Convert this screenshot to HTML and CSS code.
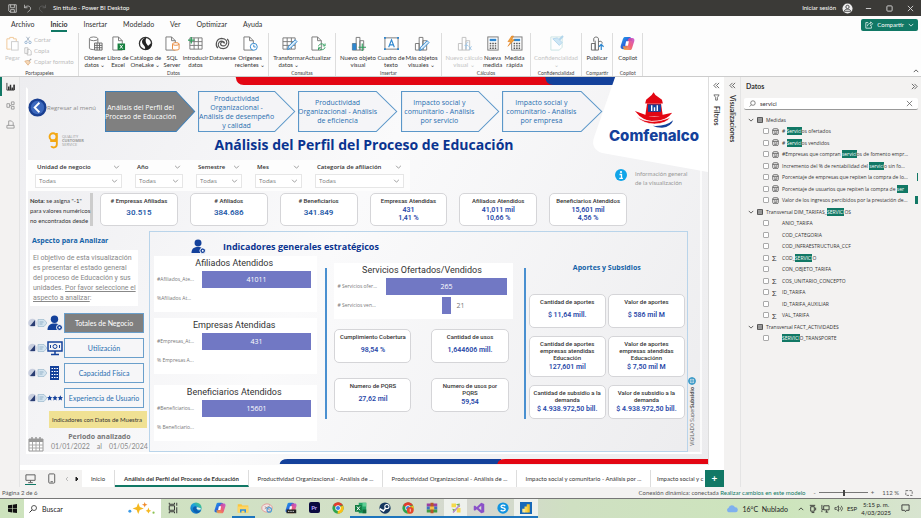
FILE: index.html
```html
<!DOCTYPE html>
<html lang="es">
<head>
<meta charset="utf-8">
<title>Sin título - Power BI Desktop</title>
<link rel="stylesheet" href="styles.css">
</head>
<body>
<svg class="defs" aria-hidden="true">
  <defs>
    <linearGradient id="cop1" x1="0" y1="0" x2="1" y2="1"><stop offset="0" stop-color="#1fa5ee"/><stop offset=".5" stop-color="#2b62d9"/><stop offset="1" stop-color="#35b27c"/></linearGradient>
    <linearGradient id="cop2" x1="1" y1="0" x2="0" y2="1"><stop offset="0" stop-color="#c04ad8"/><stop offset=".5" stop-color="#f0506e"/><stop offset="1" stop-color="#f7b52c"/></linearGradient>
    <linearGradient id="edge" x1="0" y1="1" x2="1" y2="0"><stop offset="0" stop-color="#0b62b8"/><stop offset=".5" stop-color="#1c9fe0"/><stop offset="1" stop-color="#57d36b"/></linearGradient>
    <symbol id="chev" viewBox="0 0 8 5"><path d="M1 1l3 3 3-3" fill="none" stroke="currentColor"/></symbol>
    <symbol id="page" viewBox="0 0 16 16"><path d="M3 1h6l4 4v10H3zM9 1v4h4" fill="#fff" stroke="#777"/></symbol>
    <symbol id="copilot" viewBox="0 0 16 16"><path d="M5 1h5c1.500 0 2 1 2.500 2.500L13 5h-2c-1 0-1.500.6-1.800 1.600L7.500 12c-.5 1.500-1 2-2.500 2H3c-2 0-2.800-1.500-2.200-3.500L3 3.500C3.500 2 4 1 5 1z" fill="url(#cop1)"/><path d="M11 15H6c-1.500 0-2-1-2.500-2.500L3 11h2c1 0 1.500-.6 1.800-1.600L8.500 4C9 2.500 9.500 2 11 2h2c2 0 2.800 1.500 2.200 3.500L13 12.500C12.500 14 12 15 11 15z" fill="url(#cop2)" opacity=".9"/><path d="M6.500 5.500h3L8.500 10.500h-3z" fill="#fff"/></symbol>
    <symbol id="bars" viewBox="0 0 16 16"><path d="M1.500 8h4v7h-4zM5.500 1.500h4V15h-4zM9.500 5h4v10h-4z" fill="#fff" stroke="#777"/></symbol>
    <symbol id="calc" viewBox="0 0 16 16"><rect x="3" y="1" width="11" height="14" fill="#fff" stroke="#777"/><rect x="5" y="3" width="7" height="2.500" fill="#2f87cf"/><path d="M5 8h7M5 10.500h7M5 13h7" stroke="#555" stroke-width="1.500" stroke-dasharray="1.700 1"/></symbol>
    <symbol id="table" viewBox="0 0 16 16"><path d="M1 2h13v12H1zM1 6h13M1 10h13M5.500 2v12M10 2v12" fill="#fff" stroke="#777"/></symbol>
    <symbol id="person" viewBox="0 0 16 16"><circle cx="7.500" cy="4.200" r="3.700" fill="#14419b"/><path d="M.5 15c0-5 3-6.500 7-6.500s5.500 1.500 6.500 6.500z" fill="#14419b"/><circle cx="12.500" cy="12.500" r="3" fill="#14419b" stroke="#fff"/><circle cx="12.500" cy="12.500" r="1" fill="#fff"/></symbol>
    <symbol id="measure" viewBox="0 0 10 10"><rect x="1" y="1" width="8" height="8.500" rx="2" fill="none" stroke="#444"/><path d="M1 3.500h8M3 5.500h1.500v1M5.500 5.500H7v1M3 7.700h4" stroke="#444" fill="none"/></symbol>
    <symbol id="tbl" viewBox="0 0 8 8"><path d="M1 1h6v6H1z" fill="#fff" stroke="#333" stroke-width="1.500"/><path d="M1 4h6M4 1v6" stroke="#333" stroke-width=".8"/></symbol>
    <symbol id="dbl" viewBox="0 0 8 8"><path d="M4 1L1 4l3 3M7 1L4 4l3 3" fill="none" stroke="currentColor" stroke-width=".8"/></symbol>
    <symbol id="tag" viewBox="0 0 19 10"><circle cx="4.500" cy="5" r="4.300" fill="#c9cfdf"/><path d="M2 8L7 2v6z" fill="#2a3d73"/><path d="M10 1.500h6l3 3.500-3 3.500h-6z" fill="#d3e3ee" stroke="#8fb0c8" stroke-width=".6"/><path d="M11.500 4h4M11.500 6h3" stroke="#7a9cb8" stroke-width=".7"/></symbol>
    <symbol id="chrome" viewBox="0 0 16 16"><circle cx="8" cy="8" r="7.500" fill="#2da44e"/><path d="M8 8L1.500 4.200A7.500 7.500 0 0 1 14.800 4.800H8z" fill="#e33b2e"/><path d="M8 8l6.800-3.200A7.500 7.500 0 0 1 7.500 15.500z" fill="#fbc116"/><circle cx="8" cy="8" r="3.600" fill="#fff"/><circle cx="8" cy="8" r="2.700" fill="#3b7de9"/></symbol>
  </defs>
</svg>

<div class="app">
<header class="titlebar">
  <svg class="i9" viewBox="0 0 12 12"><path d="M1 1h10v10H3L1 9zM3.500 1v4h5V1M3.500 11V7.500h5V11" fill="none" stroke="#ddd"/></svg>
  <svg class="i9" viewBox="0 0 12 12"><path d="M2 1v4h4M2 5c2-3 7-3 8 0s-2 4-4 6" fill="none" stroke="#ccc"/></svg>
  <svg class="i9" viewBox="0 0 12 12"><path d="M10 1v4H6M10 5C8 2 3 2 2 5s2 4 4 6" fill="none" stroke="#666"/></svg>
  <span>Sin título - Power BI Desktop</span>
  <span class="signin">Iniciar sesión</span>
  <svg class="i11" viewBox="0 0 12 12"><circle cx="6" cy="6" r="5.500" fill="#eee"/><circle cx="6" cy="4.300" r="1.800" fill="none" stroke="#444"/><path d="M2.500 9c0-3 7-3 7 0z" fill="none" stroke="#444"/></svg>
  <div class="winbtns">
    <svg class="i7" viewBox="0 0 8 8"><path d="M1 4h6" stroke="#ddd"/></svg>
    <svg class="i7" viewBox="0 0 8 8"><rect x="1" y="1" width="6" height="6" rx="1" fill="none" stroke="#ddd"/></svg>
    <svg class="i7" viewBox="0 0 8 8"><path d="M1 1l6 6M7 1L1 7" stroke="#ddd"/></svg>
  </div>
</header>

<nav class="menu">
  <a href="#">Archivo</a><a href="#" class="on">Inicio</a><a href="#">Insertar</a><a href="#">Modelado</a><a href="#">Ver</a><a href="#">Optimizar</a><a href="#">Ayuda</a>
  <button class="share"><svg class="i8" viewBox="0 0 10 10"><path d="M4 2H1v7h7V6.500M3 6.500C3 4 5 3 7 3V1l2.500 2.500L7 6V4.500" fill="none" stroke="#fff" stroke-width=".9"/></svg>Compartir<svg class="chev" ><use href="#chev"/></svg></button>
</nav>

<section class="ribbon">
  <div class="group g1">
    <div class="clip">
      <button class="tool off"><svg viewBox="0 0 16 16"><path d="M2 3h3V1.500h4V3h3v3M2 3v11h4" fill="none" stroke="#f0c896"/><rect x="7" y="6" width="7" height="9" fill="#fff" stroke="#ccc"/></svg>Pegar</button>
      <div class="small">
        <button><svg class="i8" viewBox="0 0 10 10"><path d="M3 1l3.500 5M7 1L3.500 6" stroke="#9ab" fill="none"/><circle cx="2.500" cy="8" r="1.500" fill="none" stroke="#8ac"/><circle cx="7.500" cy="8" r="1.500" fill="none" stroke="#8ac"/></svg>Cortar</button>
        <button><svg class="i8" viewBox="0 0 10 10"><path d="M1 1h4v7H1zM4 3h3l2 2v5H4z" fill="#fff" stroke="#bbb"/></svg>Copia</button>
        <button><svg class="i8" viewBox="0 0 10 10"><path d="M1 4l4 5 3-4-3-2z" fill="#f6d9b8" stroke="#e0b080"/><path d="M6 4l3-3" stroke="#aaa" stroke-width="1.500"/></svg>Copiar formato</button>
      </div>
    </div>
    <span class="cap">Portapapeles</span>
  </div>
  <div class="group">
    <div class="tools t2">
      <button class="tool"><svg viewBox="0 0 16 16"><path d="M1.500 3v10c0 2 9 2 9 0V3" fill="#fff" stroke="#777"/><ellipse cx="6" cy="3" rx="4.500" ry="2" fill="#fff" stroke="#777"/><path d="M7 7.500h8V15H7zM7 10h8M7 12.500h8M9.700 7.500V15M12.300 7.500V15" fill="#fff" stroke="#666"/></svg>Obtener<br>datos ⌄</button>
      <button class="tool"><svg viewBox="0 0 16 16"><use href="#page" x="-1"/><rect x="7" y="8" width="8" height="7" fill="#16803f"/><path d="M9.500 9.500l3 4M12.500 9.500l-3 4" stroke="#fff"/></svg>Libro de<br>Excel</button>
      <button class="tool"><svg viewBox="0 0 16 16"><circle cx="8" cy="8" r="6.500" fill="#fff" stroke="#333" stroke-width="1.400"/><path d="M9 1.500c-5 1-6 5-3 8 2 2 2 4 1 5 5 1 8-3 7-7l-3 3c-2-2-4-5-2-9z" fill="#222"/></svg>Catálogo de<br>OneLake ⌄</button>
      <button class="tool"><svg viewBox="0 0 16 16"><use href="#page" x="-2"/><path d="M8 8.500v5.500c0 1.300 7 1.300 7 0V8.500" fill="#fff" stroke="#e8883a"/><ellipse cx="11.500" cy="8.500" rx="3.500" ry="1.400" fill="#fff" stroke="#e8883a"/></svg>SQL<br>Server</button>
      <button class="tool"><svg viewBox="0 0 16 16"><use href="#table" x="1"/><path d="M0 4.500h7M3.500 1v7" stroke="#2f9e5c" stroke-width="1.300"/></svg>Introducir<br>datos</button>
      <button class="tool"><svg viewBox="0 0 16 16"><path d="M3 13C0 10 1 3 7 2.500c5 0 7 4 4.500 7-2 2-6 1-5.500-1.500.5-2 3-2 3.500-.5M13 3c3 3 2 10-4 10.500-5 0-7-4-4.500-7 2-2 6-1 5.500 1.500" fill="none" stroke="#555" stroke-width="1.200"/></svg>Dataverse</button>
      <button class="tool"><svg viewBox="0 0 16 16"><use href="#page" x="-2"/><circle cx="11.500" cy="11.500" r="3.700" fill="#fff" stroke="#2f87cf"/><path d="M11.500 9.300v2.400h2" fill="none" stroke="#2f87cf"/></svg>Orígenes<br>recientes ⌄</button>
    </div>
    <span class="cap">Datos</span>
  </div>
  <div class="group">
    <div class="tools t3">
      <button class="tool"><svg viewBox="0 0 16 16"><use href="#table"/><path d="M6 14.500L7 11l7-7 2 2-7 7z" fill="#d8ebfa" stroke="#2f87cf"/></svg>Transformar<br>datos ⌄</button>
      <button class="tool"><svg viewBox="0 0 16 16"><use href="#page" x="-2"/><path d="M8 11c.5-3 5-3.500 6.500-1M15 8v2.500h-2.500M15 12c-.5 3-5 3.500-6.500 1M8 15v-2.500h2.500" fill="none" stroke="#2f9e5c"/></svg>Actualizar</button>
    </div>
    <span class="cap">Consultas</span>
  </div>
  <div class="group">
    <div class="tools t4">
      <button class="tool"><svg viewBox="0 0 16 16"><use href="#bars"/><path d="M1.500 8h4v7h-4z" fill="#2f87cf"/><path d="M8 12h8M12 8v8" stroke="#2f9e5c" stroke-width="1.200"/></svg>Nuevo objeto<br>visual</button>
      <button class="tool"><svg viewBox="0 0 16 16"><rect x="1" y="2" width="14" height="12" fill="#fff" stroke="#777"/><path d="M5 12l3-8 3 8M6 9.500h4" fill="none" stroke="#2f87cf" stroke-width="1.200"/><path d="M0 1h2v2H0zM14 1h2v2h-2zM0 13h2v2H0zM14 13h2v2h-2z" fill="#2f87cf"/></svg>Cuadro de<br>texto</button>
      <button class="tool"><svg viewBox="0 0 16 16"><use href="#bars"/><path d="M6 15.500L7 12l7-7 2 2-7 7z" fill="#d8ebfa" stroke="#2f87cf"/></svg>Más objetos<br>visuales ⌄</button>
    </div>
    <span class="cap">Insertar</span>
  </div>
  <div class="group">
    <div class="tools t5">
      <button class="tool off"><svg viewBox="0 0 16 16" opacity=".45"><use href="#bars"/><path d="M12 7c-2-1-2 2-2.500 7M8 10h4M12.500 11l3 4M15.500 11l-3 4" fill="none" stroke="#2f87cf"/></svg>Nuevo cálculo<br>visual ⌄</button>
      <button class="tool"><svg viewBox="0 0 16 16"><use href="#calc"/></svg>Nueva<br>medida</button>
      <button class="tool"><svg viewBox="0 0 16 16"><use href="#calc" x="2"/><path d="M5 0L1 6h3L1 11l7-7H5l2-4z" fill="#f2a33a" stroke="#e07b1a" stroke-width=".6"/></svg>Medida<br>rápida</button>
    </div>
    <span class="cap">Cálculos</span>
  </div>
  <div class="group">
    <div class="tools t6"><button class="tool off"><svg viewBox="0 0 16 16" opacity=".5"><path d="M2 1h12v11l-3 3H2z" fill="#fff" stroke="#9cc"/><path d="M4 3l7 7 3-3-5-5z" fill="#9fd0ee" stroke="#6ab0dc"/><path d="M11 4l4-4" stroke="#6ab0dc" stroke-width="2"/></svg>Confidencialidad<br>⌄</button></div>
    <span class="cap">Confidencialidad</span>
  </div>
  <div class="group">
    <div class="tools t7"><button class="tool"><svg viewBox="0 0 16 16"><path d="M1.500 8h4v7h-4zM5.500 15V5M4 6V3c0-2.500 5-2.500 5 0v12H5.500M9 6c3-1 4 0 4 2" fill="none" stroke="#666"/><path d="M12 15V9M9.500 11.500L12 9l2.500 2.500" fill="none" stroke="#2f87cf" stroke-width="1.300"/></svg>Publicar</button></div>
    <span class="cap">Compartir</span>
  </div>
  <div class="group">
    <div class="tools t7"><button class="tool"><svg viewBox="0 0 16 16"><use href="#copilot"/></svg>Copilot</button></div>
    <span class="cap">Copilot</span>
  </div>
  <button class="collapse" aria-label="Contraer la cinta"><svg class="chev up"><use href="#chev"/></svg></button>
</section>

<main class="work">
  <nav class="rail">
    <a href="#" class="on" aria-label="Informe"><svg class="i9" viewBox="0 0 10 10"><path d="M1 1v8h8V3" fill="none" stroke="#333"/><path d="M3 5v4M5 3v6M7 6v3M9 3v6" stroke="#333" stroke-width="1.600"/></svg></a>
    <a href="#" aria-label="Modelo"><svg class="i9" viewBox="0 0 10 10"><path d="M1 3h3v4H1zM6 1h3v3H6zM6 6h3v3H6zM4 5h2" fill="none" stroke="#999"/></svg></a>
    <a href="#" aria-label="Consultas"><svg class="i9" viewBox="0 0 10 10"><path d="M3 6V1h3l2 2v3M1 6h8v3H1z" fill="none" stroke="#999"/></svg></a>
  </nav>

  <div class="center">
  <div class="report">
    <svg class="backdrop" viewBox="0 0 689 388" preserveAspectRatio="none" aria-hidden="true">
      <path d="M216 0H540V8H224Q217 8 216 0z" fill="#e30613"/>
      <path d="M526 0H600L594 8H534Q527 8 526 0z" fill="#14419b"/>
      <path d="M596 0H689V95L583 76Q571 72 575 60z" fill="#fff"/>
      <path d="M260 387Q261 382 268 382H482V387z" fill="#14419b"/>
      <path d="M478 387Q479 382 486 382H689V387z" fill="#e30613"/>
    </svg>
    <div class="frame">
      <div class="head">
        <a href="#" class="back"><svg viewBox="0 0 20 20"><circle cx="10" cy="10" r="9.500" fill="#1a3f91"/><circle cx="10" cy="10" r="7" fill="#3c68bd"/><path d="M12 5l-5 5 5 5" fill="none" stroke="#fff" stroke-width="2"/></svg>Regresar al menú</a>
        <nav class="steps">
          <a href="#" class="on"><svg viewBox="0 0 90 41" preserveAspectRatio="none"><path d="M.5.500H71L89.500 20.500 71 40.500H.5z"/></svg><span>Análisis del Perfil del<br>Proceso de Educación</span></a>
          <a href="#"><svg viewBox="0 0 90 41" preserveAspectRatio="none"><path d="M.5.500H71L89.500 20.500 71 40.500H.5z"/></svg><span>Productividad<br>Organizacional -<br>Análisis de desempeño<br>y calidad</span></a>
          <a href="#"><svg viewBox="0 0 90 41" preserveAspectRatio="none"><path d="M.5.500H71L89.500 20.500 71 40.500H.5z"/></svg><span>Productividad<br>Organizacional - Análisis<br>de eficiencia</span></a>
          <a href="#"><svg viewBox="0 0 90 41" preserveAspectRatio="none"><path d="M.5.500H71L89.500 20.500 71 40.500H.5z"/></svg><span>Impacto social y<br>comunitario - Análisis<br>por servicio</span></a>
          <a href="#"><svg viewBox="0 0 90 41" preserveAspectRatio="none"><path d="M.5.500H71L89.500 20.500 71 40.500H.5z"/></svg><span>Impacto social y<br>comunitario - Análisis<br>por empresa</span></a>
        </nav>
        <div class="brand">
          <svg viewBox="0 0 44 38"><path d="M12 12l1-4 6-5 2-3 2 3 7 5 1 4z" fill="#e30613"/><path d="M14 12h15l2 14H12z" fill="#e30613"/><path d="M15 13h14v8H15z" fill="#14419b"/><path d="M19 14v6M22 16v4M25 14v6" stroke="#fff" stroke-width="1.500"/><path d="M1 20l11 4q10 5 19 0l10-2q-6 8-17 9-14 1-23-11z" fill="#e30613"/><path d="M3 26q14 10 36 1-5 7-17 7-12 0-19-8z" fill="#e30613" stroke="#fff" stroke-width=".7"/><path d="M20 36q14 1 22-6-2 7-12 8-6 0-10-2z" fill="#14419b"/></svg>
          <span>Comfenalco</span>
        </div>
        <div class="quality"><svg viewBox="0 0 12 18"><circle cx="5" cy="5" r="3.700" fill="none" stroke="#f3a712" stroke-width="2"/><path d="M9 1v12c0 4-5 4-6 2M2 9.500h6" fill="none" stroke="#f3a712" stroke-width="2"/></svg><span>QUALITY<br><b>CUSTOMER</b><br>SERVICE</span></div>
        <h1>Análisis del Perfil del Proceso de Educación</h1>
      </div>

      <div class="slicers">
        <label class="slicer"><span class="cat">Unidad de negocio<svg class="chev"><use href="#chev"/></svg></span><span class="pick"><select><option>Todas</option></select><svg class="chev"><use href="#chev"/></svg></span></label>
        <label class="slicer"><span class="cat">Año<svg class="chev"><use href="#chev"/></svg></span><span class="pick"><select><option>Todas</option></select><svg class="chev"><use href="#chev"/></svg></span></label>
        <label class="slicer"><span class="cat">Semestre<svg class="chev"><use href="#chev"/></svg></span><span class="pick"><select><option>Todas</option></select><svg class="chev"><use href="#chev"/></svg></span></label>
        <label class="slicer"><span class="cat">Mes<svg class="chev"><use href="#chev"/></svg></span><span class="pick"><select><option>Todas</option></select><svg class="chev"><use href="#chev"/></svg></span></label>
        <label class="slicer"><span class="cat">Categoría de afiliación<svg class="chev"><use href="#chev"/></svg></span><span class="pick"><select><option>Todas</option></select><svg class="chev"><use href="#chev"/></svg></span></label>
        <div class="info"><svg viewBox="0 0 12 12"><circle cx="6" cy="6" r="6" fill="#12a5e8"/><circle cx="6" cy="3" r="1.100" fill="#fff"/><path d="M4.500 5.500H6.500V9.300M4.300 9.300h3.600" fill="none" stroke="#fff" stroke-width="1.300"/></svg><span>Información general<br>de la visualización</span></div>
      </div>

      <div class="kpis">
        <p class="note"><b>Nota:</b> se asigna "-1"<br>para valores numéricos<br>no encontrados desde</p>
        <div class="cards six">
          <div class="card one"><h3># Empresas Afiliadas</h3><b>30.515</b></div>
          <div class="card one"><h3># Afiliados</h3><b>384.686</b></div>
          <div class="card one"><h3># Beneficiarios</h3><b>341.849</b></div>
          <div class="card"><h3>Empresas Atendidas</h3><b>431<br>1,41 %</b></div>
          <div class="card"><h3>Afiliados Atendidos</h3><b>41,011 mil<br>10,66 %</b></div>
          <div class="card"><h3>Beneficiarios Atendidos</h3><b>15,601 mil<br>4,56 %</b></div>
        </div>
      </div>

      <div class="body">
        <aside class="aspects">
          <h2>Aspecto para Analizar</h2>
          <p>El objetivo de esta visualización<br>es presentar el estado general<br>del proceso de Educación y sus<br>unidades. <u>Por favor seleccione el</u><br><u>aspecto a analizar</u>:</p>
          <div class="aspect"><svg class="tag"><use href="#tag"/></svg><svg class="pic"><use href="#person"/></svg><button class="on">Totales de Negocio</button></div>
          <div class="aspect"><svg class="tag"><use href="#tag"/></svg><svg class="pic" viewBox="0 0 16 16"><path d="M1 2h14v9H1zM8 11v3M4 14.500h8" fill="none" stroke="#14419b" stroke-width="1.500"/><circle cx="8" cy="6.500" r="2" fill="none" stroke="#14419b"/><path d="M3.500 5v3M12.500 5v3" stroke="#14419b"/></svg><button>Utilización</button></div>
          <div class="aspect"><svg class="tag"><use href="#tag"/></svg><svg class="pic" viewBox="0 0 16 16"><path d="M3 1h9v14H3z" fill="#14419b"/><path d="M4.500 3.500h7M4.500 6.500h7M4.500 9.500h7M4.500 12.500h7" stroke="#fff" stroke-width="1.200" stroke-dasharray="1.500 1"/></svg><button>Capacidad Física</button></div>
          <div class="aspect"><svg class="tag"><use href="#tag"/></svg><svg class="pic" viewBox="0 0 18 16"><path id="st" d="M3 5l.9 2 2.100.2-1.600 1.500.5 2.100L3 9.700l-1.900 1.100.5-2.100L0 7.200 2.100 7z" fill="#14419b"/><use href="#st" x="6"/><use href="#st" x="12"/></svg><button>Experiencia de Usuario</button></div>
          <div class="sample">Indicadores con Datos de Muestra</div>
          <div class="period">
            <svg viewBox="0 0 16 16"><path d="M1 3h14v12H1z" fill="#fff" stroke="#999"/><path d="M1 3h14v3H1z" fill="#999"/><path d="M4 1v3M8 1v3M12 1v3" stroke="#999" stroke-width="1.500"/><path d="M1 9h14M1 12h14M4.500 6v9M8 6v9M11.500 6v9" stroke="#aaa"/></svg>
            <h3>Periodo analizado</h3>
            <span>01/01/2022</span><span>al</span><span>01/05/2024</span>
          </div>
        </aside>

        <section class="panel">
          <h2><svg><use href="#person"/></svg>Indicadores generales estratégicos</h2>
          <div class="cols">
            <div class="funnels">
              <figure><figcaption>Afiliados Atendidos</figcaption><span>#Afiliados_Ate...</span><div class="bar">41011</div><span>%Afiliados At...</span></figure>
              <figure><figcaption>Empresas Atendidas</figcaption><span>#Empresas_At...</span><div class="bar">431</div><span>% Empresas A...</span></figure>
              <figure class="last"><figcaption>Beneficiarios Atendidos</figcaption><span>#Beneficiarios...</span><div class="bar">15601</div><span>% Beneficiario...</span></figure>
            </div>
            <div class="mid">
              <figure><figcaption>Servicios Ofertados/Vendidos</figcaption><span># Servicios ofer...</span><div class="bar">265</div><span># Servicios ven...</span><div class="short"><i></i><span class="n">21</span></div></figure>
              <div class="cards two">
                <div class="card one"><h3>Cumplimiento Cobertura</h3><b>98,54 %</b></div>
                <div class="card one"><h3>Cantidad de usos</h3><b>1,644606 mill.</b></div>
                <div class="card one"><h3>Numero de PQRS</h3><b>27,62 mil</b></div>
                <div class="card one"><h3>Numero de usos por PQRS</h3><b>59,54</b></div>
              </div>
            </div>
            <div class="right">
              <h3 class="sub">Aportes y Subsidios</h3>
              <div class="cards money">
                <div class="card one"><h3>Cantidad de aportes</h3><b>$ 11,64 mill.</b></div>
                <div class="card one"><h3>Valor de aportes</h3><b>$ 586 mil M</b></div>
                <div class="card one"><h3>Cantidad de aportes empresas atendidas Educación</h3><b>127,601 mil</b></div>
                <div class="card one"><h3>Valor de aportes<br>empresas atendidas Educaciónn</h3><b>$ 7,50 mil M</b></div>
                <div class="card one"><h3>Cantidad de subsidio a la demanda</h3><b>$ 4.938.972,50 bill.</b></div>
                <div class="card one"><h3>Valor de subsidio a la demanda</h3><b>$ 4.938.972,50 bill.</b></div>
              </div>
            </div>
          </div>
        </section>
        <div class="seal"><svg viewBox="0 0 8 8"><circle cx="4" cy="4" r="3" fill="none" stroke="#3f9cc9" stroke-width="1.500"/><path d="M4 0v8M0 4h8" stroke="#3f9cc9"/></svg><span>VIGILADO Super<b>Subsidio</b></span></div>
      </div>
    </div>
  </div>

  <nav class="pages">
    <button class="view on" aria-label="Escritorio"><svg viewBox="0 0 12 12"><path d="M1 2h10v6H1zM6 8v2M3.500 10.500h5" fill="none" stroke="#555"/></svg></button>
    <button class="view" aria-label="Móvil"><svg viewBox="0 0 12 12"><rect x="3" y="1" width="6.500" height="10" rx="1" fill="none" stroke="#555"/><path d="M5 9.500h2.500" stroke="#555"/></svg></button>
    <button class="step" aria-label="Anterior"><svg viewBox="0 0 4 6"><path d="M3 1L1 3l2 2" fill="none" stroke="#bbb"/></svg></button>
    <button class="step" aria-label="Siguiente"><svg viewBox="0 0 4 6"><path d="M1 1l2 2-2 2z" fill="#222" stroke="#222"/></svg></button>
    <a href="#" class="home">Inicio</a>
    <a href="#" class="on">Análisis del Perfil del Proceso de Educación</a>
    <a href="#">Productividad Organizacional - Análisis de ...</a>
    <a href="#">Productividad Organizacional - Análisis de ...</a>
    <a href="#">Impacto social y comunitario - Análisis por ...</a>
    <a href="#" class="cut">Impacto social y c</a>
  </nav>
  </div>

  <aside class="side filters"><svg class="i7"><use href="#dbl"/></svg><svg class="i7" viewBox="0 0 8 8"><path d="M1 1h6L5 4v3H3V4z" fill="none" stroke="#444" stroke-width=".8"/></svg><span>Filtros</span><button class="add" aria-label="Nueva página">+</button></aside>
  <aside class="side visuals"><svg class="i7"><use href="#dbl"/></svg><span>Visualizaciones</span></aside>
  <aside class="data">
    <header><h2>Datos</h2><svg class="i7 flip"><use href="#dbl"/></svg></header>
    <div class="search"><svg class="i7" viewBox="0 0 8 8"><circle cx="4.500" cy="3.500" r="2.600" fill="none" stroke="#555" stroke-width=".8"/><path d="M2.700 5.500L.7 7.500" stroke="#555" stroke-width=".8"/></svg><input type="text" value="servici" aria-label="Buscar"><svg class="i7" viewBox="0 0 8 8"><path d="M1 1l6 6M7 1L1 7" stroke="#555" stroke-width=".8"/></svg></div>
    <div class="tree">
      <div class="node"><svg class="chev"><use href="#chev"/></svg><svg class="ti"><use href="#tbl"/></svg><span>Medidas</span></div>
      <label><input type="checkbox"><svg><use href="#measure"/></svg><span># <mark>Servici</mark>os ofertados</span></label>
      <label><input type="checkbox"><svg><use href="#measure"/></svg><span># <mark>Servici</mark>os vendidos</span></label>
      <label><input type="checkbox"><svg><use href="#measure"/></svg><span>#Empresas que compran <mark>servici</mark>os de fomento empr...</span></label>
      <label><input type="checkbox"><svg><use href="#measure"/></svg><span>Incremento del % de rentabilidad del <mark>servici</mark>o sin fo...</span></label>
      <label><input type="checkbox"><svg><use href="#measure"/></svg><span>Porcentaje de empresas que repiten la compra de lo...</span><i class="thin"></i></label>
      <label><input type="checkbox"><svg><use href="#measure"/></svg><span>Porcentaje de usuarios que repiten la compra de <mark>ser   </mark></span></label>
      <label><input type="checkbox"><svg><use href="#measure"/></svg><span>Valor de los ingresos percibidos por la prestación de...</span><i></i></label>
      <div class="node"><svg class="chev"><use href="#chev"/></svg><svg class="ti"><use href="#tbl"/></svg><span>Transversal DIM_TARIFAS_<mark>SERVICI</mark>OS</span></div>
      <label><input type="checkbox"><em></em><span>ANIO_TARIFA</span></label>
      <label><input type="checkbox"><em></em><span>COD_CATEGORIA</span></label>
      <label><input type="checkbox"><em></em><span>COD_INFRAESTRUCTURA_CCF</span></label>
      <label><input type="checkbox"><em>Σ</em><span>COD_<mark>SERVICI</mark>O</span></label>
      <label><input type="checkbox"><em></em><span>CON_OBJETO_TARIFA</span></label>
      <label><input type="checkbox"><em>Σ</em><span>COS_UNITARIO_CONCEPTO</span></label>
      <label><input type="checkbox"><em>Σ</em><span>ID_TARIFA</span></label>
      <label><input type="checkbox"><em></em><span>ID_TARIFA_AUXILIAR</span></label>
      <label><input type="checkbox"><em>Σ</em><span>VAL_TARIFA</span></label>
      <div class="node"><svg class="chev"><use href="#chev"/></svg><svg class="ti"><use href="#tbl"/></svg><span>Transversal FACT_ACTIVIDADES</span></div>
      <label><input type="checkbox"><em></em><span><mark>SERVICI</mark>O_TRANSPORTE</span></label>
    </div>
  </aside>
</main>

<footer class="status">
  <span>Página 2 de 6</span>
  <span class="conn">Conexión dinámica: conectada <a href="#">Realizar cambios en este modelo</a></span>
  <div class="zoom"><span>-</span><input type="range" min="0" max="100" value="52" aria-label="Zoom"><span>+</span></div>
  <span>112 %</span>
  <svg class="i8" viewBox="0 0 10 8"><rect x="1" y="1" width="8" height="6" fill="none" stroke="#555" stroke-dasharray="3 1.500"/></svg>
</footer>

<footer class="taskbar">
  <button class="start" aria-label="Inicio"><svg viewBox="0 0 10 10"><path d="M0 1.500l4.500-.7v4H0zM5.200.7L10 0v4.800H5.200zM0 5.400h4.500v4L0 8.700zM5.200 5.400H10V10l-4.800-.6z" fill="#111"/></svg></button>
  <label class="find"><svg viewBox="0 0 8 8"><circle cx="5" cy="3" r="2.500" fill="none" stroke="#333" stroke-width=".8"/><path d="M3.200 4.800L.5 7.500" stroke="#333"/></svg><input type="text" value="Buscar" aria-label="Buscar"><svg class="spark" viewBox="0 0 30 14"><path d="M12 1l1.700 4.300L18 7l-4.300 1.700L12 13l-1.700-4.300L6 7l4.300-1.700z" fill="#f5b81f"/><path d="M19 0l.8 2.200L22 3l-2.200.8L19 6l-.8-2.200L16 3l2.200-.8z" fill="#f08a2c"/><circle cx="3" cy="10" r="1.600" fill="#3e9be8"/><path d="M23 6l1 2.500 2 1-2 1-1 2-1-2-2-1 2-1z" fill="#f5b81f"/><circle cx="28.500" cy="11.500" r="1.200" fill="#8cc152"/></svg></label>
  <div class="apps">
    <button aria-label="Vista de tareas"><svg viewBox="0 0 16 16"><path d="M3 5h7v6H3zM3 1v2h7V1M3 15v-2h7v2M13 1v4M13 7v8" fill="none" stroke="#333" stroke-width="1.300"/></svg></button>
    <button aria-label="Edge"><svg viewBox="0 0 16 16"><circle cx="8" cy="8" r="7.500" fill="url(#edge)"/><path d="M15 9c-1 2-5 2-6 0 1-2-1-4-3-3-4 2-2 8 3 9 3 0 5-2 6-4-2 1-5 1-6-1" fill="#0d5fb0"/><path d="M9 9c-1-1 0-2 1-2s4 1 5 2c-1 2-5 1.500-6 0z" fill="#e4f4ea"/></svg></button>
    <button aria-label="Copilot"><svg viewBox="0 0 16 16"><use href="#copilot"/></svg></button>
    <button class="run" aria-label="Explorador"><svg viewBox="0 0 16 16"><path d="M1 3h5l1 1.500h8V14H1z" fill="#fbc53c"/><path d="M1 6h14v8H1z" fill="#fdd766"/><path d="M4 14V9.500h8V14h-2v-2.500H6V14z" fill="#2f8fe0"/></svg></button>
    <button aria-label="Recortes"><svg viewBox="0 0 16 16"><ellipse cx="8" cy="8" rx="7" ry="5.500" fill="#f3e4e4" stroke="#e08a8a"/><path d="M5 9l7-4M5 6l7 5" stroke="#888"/><circle cx="11" cy="10.500" r="3" fill="none" stroke="#4b9cd6" stroke-width="1.500"/></svg></button>
    <button aria-label="Copilot 365"><svg viewBox="0 0 16 16"><use href="#copilot"/><path d="M2 10h13v5H2z" fill="#222"/><path d="M4 12.500h9" stroke="#fff" stroke-dasharray="2 1"/></svg></button>
    <button aria-label="Premiere"><span class="pr">Pr</span></button>
    <button aria-label="Chrome"><svg viewBox="0 0 16 16"><use href="#chrome"/></svg></button>
    <button class="run" aria-label="Excel"><svg viewBox="0 0 16 16"><path d="M5 1h10v14H5z" fill="#21a366"/><path d="M10 1h5v5h-5z" fill="#5fce94"/><path d="M10 10h5v5h-5z" fill="#146c3c"/><path d="M0 4h9v9H0z" fill="#107c41"/><path d="M2.500 6l4 5M6.500 6l-4 5" stroke="#fff" stroke-width="1.300"/></svg></button>
    <button class="run" aria-label="Steam"><svg viewBox="0 0 16 16"><circle cx="8" cy="8" r="7.500" fill="#15375f"/><path d="M1 9l5 3 3-4" stroke="#fff" stroke-width="2" fill="none"/><circle cx="10.500" cy="6" r="2.800" fill="none" stroke="#fff" stroke-width="1.400"/></svg></button>
    <button class="run" aria-label="Chrome 2"><svg viewBox="0 0 16 16"><use href="#chrome"/><circle cx="11" cy="11" r="4.500" fill="#e5492b"/><path d="M11 9v4" stroke="#fff"/></svg></button>
    <button class="run" aria-label="WinRAR"><svg viewBox="0 0 16 16"><path d="M1 2h14v4H1z" fill="#9b3fa0"/><path d="M1 6h14v4H1z" fill="#3c6fc4"/><path d="M1 10h14v4H1z" fill="#3f9b45"/><path d="M6 1h4v14H6z" fill="#b8552a"/><path d="M5 6h6v4H5z" fill="#f3c34a"/></svg></button>
    <button class="run lit" aria-label="Recortes y anotación"><svg viewBox="0 0 16 16"><path d="M2 2h6v5H2zM9 8h5v6H9z" fill="#f5d94a"/><path d="M8 3l5-1v5zM3 9l5 1-3 4z" fill="#78b84c"/><path d="M4 14L13 4" stroke="#b98bd0" stroke-width="2"/></svg></button>
    <button class="run" aria-label="Visual Studio"><svg viewBox="0 0 16 16"><path d="M11 1l4 1.500v11L11 15 5 9.500 2.500 11.500 1 10.500v-5l1.500-1L5 6.500zM11 5L7.500 8l3.500 3z" fill="#8a50c8" fill-rule="evenodd"/></svg></button>
    <button class="run" aria-label="Skype"><svg viewBox="0 0 16 16"><circle cx="8" cy="8" r="7.500" fill="#1294e0"/><path d="M11 5.500C9.500 3.500 5 4 5.500 6.300c.5 2 5.500 1.200 5.500 3.500 0 2.500-5 2.700-6 .7" fill="none" stroke="#fff" stroke-width="1.700"/></svg></button>
    <button class="run lit" aria-label="Power BI"><svg viewBox="0 0 16 16"><path d="M0 0h16v16H0z" fill="#1668b8"/><path d="M9 3h4v11H9z" fill="#f2c027"/><path d="M6 6h4v8H6z" fill="#f7d553"/><path d="M3 9h4v5H3z" fill="#fbe58a"/></svg></button>
  </div>
  <div class="tray">
    <svg class="cloud" viewBox="0 0 14 10"><path d="M3 9.500a3 3 0 0 1 0-5.500 4 4 0 0 1 7.500-.5 3 3 0 0 1 .5 6z" fill="#7fb0ee"/></svg>
    <span class="temp">16°C&nbsp; Nublado</span>
    <svg class="chev up"><use href="#chev"/></svg>
    <svg class="i9" viewBox="0 0 10 10"><path d="M3 3h4v5H3zM2 1.500h6M4 9.500h3M8.500 4v3" fill="none" stroke="#333"/></svg>
    <svg class="i9" viewBox="0 0 10 10"><path d="M3 2h6v4.500H3zM5 9h3M6 7v2M1 1v5h2M1 7v2" fill="none" stroke="#333"/></svg>
    <svg class="i9" viewBox="0 0 10 10"><path d="M1 4h2l2-2v6L3 6H1zM6.500 3.500q1.500 1.500 0 3M8 2q3 3 0 6" fill="none" stroke="#333" stroke-width=".8"/></svg>
    <span>ESP</span>
    <span class="clock">5:15 p. m.<br>4/03/2025</span>
    <svg class="i9" viewBox="0 0 10 10"><path d="M1 1h8v6H6L5 8.500 4 7H1z" fill="none" stroke="#333"/></svg>
  </div>
</footer>
</div>
</body>
</html>
```

FILE: styles.css
```css
:root {
  --ui: Lato, "Open Sans", sans-serif;
  --rep: "Open Sans", sans-serif;
  --din: Roboto, sans-serif;
  --green: #117865;
  --navy: #0a3490;
  --blue: #2a6fb0;
}
* { box-sizing: border-box; margin: 0; padding: 0; }
html, body { height: 100%; }
body { font: 6px/8px var(--ui); color: #333; background: #f3f2f1; overflow: hidden; }
button, input, select { font: inherit; color: inherit; border: 0; background: none; }
a { color: inherit; text-decoration: none; }
svg { display: block; flex: none; overflow: visible; }
.defs { position: absolute; width: 0; height: 0; }
.i7 { width: 7px; height: 7px; }
.i8 { width: 8px; height: 8px; }
.i9 { width: 9px; height: 9px; }
.i11 { width: 11px; height: 11px; }
.chev { width: 6px; height: 4px; }
.up { transform: rotate(180deg); }
.flip { transform: scaleX(-1); }
mark { background: var(--green); color: #fff; white-space: pre; padding: 1px 0; }
.app { display: flex; flex-direction: column; height: 100vh; }

.titlebar { display: flex; align-items: center; gap: 6px; height: 16px; padding: 0 7px 0 8px; background: #3b3a37; color: #fff; }
.signin { margin-left: auto; }
.winbtns { display: flex; gap: 14px; margin-left: 6px; }

.menu { display: flex; align-items: center; gap: 16px; height: 17px; padding: 0 3px 0 11px; background: #fdfdfd; font-size: 7px; line-height: 12px; }
.menu a { border-bottom: 2px solid transparent; }
.menu .on { border-color: var(--green); font-weight: 700; }
.share { display: flex; align-items: center; gap: 4px; margin-left: auto; padding: 0 4px; background: var(--green); color: #fff; border-radius: 2px; font-size: 6px; }

.ribbon { display: flex; height: 44px; background: #fdfdfd; border-bottom: 1px solid #ccc; }
.group { display: flex; flex-direction: column; justify-content: space-between; align-items: center; padding: 3px 4px 0; border-right: 1px solid #ddd; }
.g1 { padding-left: 5px; }
.clip { display: flex; gap: 4px; width: 69px; }
.small { display: flex; flex-direction: column; gap: 3px; color: #bbb; white-space: nowrap; }
.small button { display: flex; gap: 2px; }
.tools { display: grid; }
.t2 { grid-template-columns: 24px 22px 33px 20px 27px 27px 28px; }
.t3 { grid-template-columns: 32px 26px; }
.t4 { grid-template-columns: 36px 30px 31px; }
.t5 { grid-template-columns: 36px 21px 23px; }
.t6 { grid-template-columns: 42px; }
.t7 { grid-template-columns: 21px; }
.tool { display: flex; flex-direction: column; align-items: center; line-height: 7px; white-space: nowrap; text-align: center; }
.tool svg { width: 15px; height: 15px; margin-bottom: 3px; }
.off { color: #c4c4c4; }
.cap { font-size: 5px; line-height: 6px; color: #444; }
.collapse { margin: auto 2px 3px auto; }

.work { flex: 1; display: grid; grid-template-columns: 20px minmax(0, 1fr) 15px 17px 180px; min-height: 0; }
.rail { display: flex; flex-direction: column; border-right: 1px solid #e4e4e4; }
.rail a { display: flex; justify-content: center; align-items: center; height: 19px; border-left: 2px solid transparent; }
.rail .on { border-color: var(--green); }
.center { display: flex; flex-direction: column; min-width: 0; background: #fff; }

.report { position: relative; flex: 1; padding: 10px 6px 11px; margin-bottom: 5px; background: linear-gradient(120deg, #ededf0, #fafafb 45%, #ececee); border-right: 1px solid #ddd; font-family: var(--rep); }
.backdrop { position: absolute; left: 0; top: 0; width: 100%; height: 100%; }
.frame { position: relative; height: 100%; border: 2px solid #fff; border-top-color: transparent; border-right-color: rgba(255, 255, 255, .7); }
.head { display: grid; grid-template-columns: 77px minmax(0, 1fr) 98px; grid-template-rows: 41px 26px; padding-top: 2px; }
.back { display: flex; align-items: center; color: #8a8a8a; white-space: nowrap; align-self: start; margin-top: 7px; }
.back svg { width: 19px; height: 19px; }
.steps { display: grid; grid-template-columns: 90fr 97fr 99fr 98fr 100fr; gap: 3px; }
.steps a { position: relative; display: flex; align-items: center; color: var(--blue); text-align: center; font-size: 7px; line-height: 9px; }
.steps svg { position: absolute; inset: 0; width: 100%; height: 100%; fill: rgba(244, 244, 246, .7); stroke: #5b97c9; }
.steps .on { color: #fff; }
.steps .on svg { fill: #808080; stroke: #3d7fb8; }
.steps span { position: relative; width: 79%; white-space: nowrap; display: flex; justify-content: center; }
.brand { grid-column: 3; grid-row: 1 / 3; display: flex; flex-direction: column; align-items: center; font: 800 15px/16px Inter, sans-serif; color: #14419b; padding-left: 6px; }
.brand svg { width: 41px; height: 36px; margin-top: 1px; }
.quality { grid-column: 1; grid-row: 2; display: flex; gap: 2px; padding-left: 20px; align-items: flex-start; font-size: 4px; line-height: 4px; color: #999; }
.quality svg { width: 12px; height: 17px; }
.quality span { padding-top: 3px; }
h1 { grid-column: 1 / 4; grid-row: 2; text-align: center; font-size: 14px; line-height: 26px; color: var(--navy); }

.slicers { display: grid; grid-template-columns: 100fr 61fr 59fr 60fr 102fr 200fr 90fr; height: 33px; padding-top: 2px; }
.slicer { display: flex; flex-direction: column; gap: 3px; padding: 3px 6px 2px 7px; background: #fdfdfd; }
.cat { display: flex; justify-content: space-between; align-items: center; padding: 0 2px; font-weight: 600; white-space: nowrap; }
.slicer .chev { width: 7px; color: #888; }
.pick { display: flex; align-items: center; height: 14px; padding: 0 3px; border: 1px solid #e6e6e6; background: #fff; }
.pick select { appearance: none; flex: 1; min-width: 0; color: #777; }
.info { grid-column: 7; display: flex; gap: 8px; padding: 9px 0 0 5px; font: 6px/9px var(--ui); color: #999; white-space: nowrap; }
.info svg { width: 12px; height: 12px; }

.kpis { display: grid; grid-template-columns: 65px minmax(0, 1fr); gap: 7px; padding: 2px 73px 0 0; }
.note { font: 6px/10px var(--ui); color: #333; border-right: 3px solid #ccc; padding: 3px 0 0 2px; white-space: nowrap; height: 33px; }
.cards { display: grid; }
.six { grid-template-columns: repeat(6, 1fr); gap: 12px; }
.card { display: flex; flex-direction: column; align-items: center; text-align: center; padding: 3px 2px; border: 1px solid #d5d5d8; border-radius: 5px; background: #fff; font-family: var(--din); line-height: 8px; }
.card h3 { font-size: 6px; line-height: 7px; font-weight: 500; color: #333; }
.card b { font-size: 7px; color: #2848a8; font-weight: 600; white-space: nowrap; }
.six .card { height: 33px; }
.six b { margin-top: 2px; }
.six .one b { font-size: 8px; color: #1f5aa8; }
.one b { margin: auto 0; }
.six h3 { white-space: nowrap; }

.body { display: grid; grid-template-columns: 121px minmax(0, 1fr) 12px; padding-top: 5px; }
.aspects { padding-right: 5px; }
.aspects h2 { font-size: 7px; line-height: 10px; color: #1362a8; padding: 5px 4px 4px; }
.aspects p { width: 108px; height: 56px; margin: 0 0 7px 2px; padding: 3px; font: 7px/10px var(--din); color: #888; background: #fff; white-space: nowrap; }
.aspect { display: flex; align-items: center; height: 20px; margin-bottom: 5px; }
.tag { width: 19px; height: 10px; }
.pic { width: 16px; height: 16px; margin: 0 1px 0 0; }
.aspect button { flex: 1; align-self: stretch; border: 1px solid #6a9fcb; color: var(--blue); font: 7px/8px var(--ui); background: #f6f6f8; }
.aspect .on { background: #7f7f7f; color: #fff; }
.sample { margin: -2px -3px 0 21px; padding: 0 3px; font: 6px/17px var(--ui); color: #333; background: #f0e193; white-space: nowrap; }
.period { display: grid; grid-template-columns: 16px auto auto auto; gap: 0 7px; justify-content: start; color: #888; font: 7px/9px var(--ui); padding-top: 4px; white-space: nowrap; }
.period svg { grid-row: 1 / 3; width: 16px; height: 16px; margin-top: 4px; }
.period h3 { grid-column: 2 / 5; font: 700 7px/9px var(--rep); text-align: center; color: #777; }

.panel { border: 1px solid #b9d4ea; padding: 7px 2px 5px 4px; }
.panel h2 { display: flex; gap: 17px; align-items: center; padding-left: 37px; font-size: 9px; line-height: 15px; color: var(--navy); }
.panel h2 svg { width: 15px; height: 15px; }
.cols { display: grid; grid-template-columns: 164fr 8px 201fr 160fr; margin-top: 2px; }
figure { display: grid; grid-template-columns: 43fr 111fr; gap: 2px 2px; align-items: center; height: 56px; padding: 1px 6px 4px 3px; background: #fff; font: 5px/17px var(--rep); color: #777; white-space: nowrap; align-content: start; }
figcaption { grid-column: 1 / 3; text-align: center; font: 400 9px/12px var(--din); color: #333; }
.bar { background: #7178c4; color: #fff; text-align: center; font-size: 7px; line-height: 17px; }
.funnels { display: grid; gap: 6px; }
.last { margin-top: 5px; }
.mid { grid-column: 3; margin: 12px 0 22px; padding: 0 11px 0 7px; border-left: 2px solid #4a90d0; border-right: 2px solid #4a90d0; }
.mid figure { grid-template-columns: 48fr 123fr; margin-top: -5px; }
.short { display: grid; grid-template-columns: 56fr 10fr 56fr; gap: 0; }
.short i { grid-column: 2; background: #7178c4; }
.short .n { padding-left: 5px; font-size: 7px; }
.two { grid-template-columns: 1fr 1fr; gap: 15px 20px; margin: 10px 4px 0 0; }
.two .card { height: 34px; }
.right { padding: 6px 0 0 3px; }
.sub { font-size: 7px; line-height: 12px; color: #1362a8; text-align: center; }
.money { grid-template-columns: 1fr 1fr; grid-template-rows: 34px 41px 34px; gap: 0 2px; row-gap: 8px; margin-top: 20px; }
.seal { display: flex; flex-direction: column; align-items: center; justify-content: flex-end; gap: 2px; padding: 0 4px 6px 0; font-size: 5px; line-height: 6px; color: #555; }
.seal svg { width: 8px; height: 8px; }
.seal span { writing-mode: vertical-rl; transform: rotate(180deg); }

.pages { display: flex; height: 17px; background: #f3f2f1; line-height: 17px; }
.pages a { flex: 0 1 134px; min-width: 0; text-align: center; background: #fff; border-right: 1px solid #ddd; white-space: nowrap; }
.pages .home { flex-basis: 33px; }
.pages a.on { font-weight: 700; border-bottom: 2px solid var(--green); }
.pages .cut { flex: 1 1 0; text-align: left; padding-left: 6px; border: 0; }
.view { width: 21px; display: flex; justify-content: center; align-items: center; }
.view svg { width: 11px; height: 11px; }
.view.on { background: linear-gradient(var(--green), var(--green)) center 14px / 11px 1px no-repeat; }
.step { width: 10px; display: flex; justify-content: center; align-items: center; }
.step svg { width: 4px; height: 6px; }

.side { display: flex; flex-direction: column; align-items: center; gap: 5px; padding-top: 5px; color: #333; font: 700 7px/9px var(--ui); }
.side span { writing-mode: vertical-rl; }
.filters { position: relative; background: #fff; }
.add { align-self: flex-end; margin-top: auto; width: 19px; height: 17px; background: var(--green); color: #fff; font: 700 10px/17px var(--ui); }
.visuals { border-right: 1px solid #e4e4e4; gap: 6px; }
.data { padding: 3px 3px 0; overflow: hidden; }
.data header { display: flex; justify-content: space-between; align-items: center; padding-left: 2px; }
.data h2 { font-size: 7px; line-height: 12px; }
.search { display: flex; align-items: center; gap: 4px; height: 12px; margin-top: 6px; padding: 0 5px; background: #fff; border-bottom: 1px solid #999; border-radius: 2px; }
.search input { flex: 1; min-width: 0; outline: 0; }
.tree { display: grid; grid-auto-rows: 1fr; height: 230px; margin-top: 4px; font-family: var(--rep); font-size: 5px; }
.tree > * { display: flex; align-items: center; min-width: 0; white-space: nowrap; }
.node { gap: 3px; padding-left: 4px; }
.ti { width: 6px; height: 6px; }
.tree label { padding-left: 19px; gap: 3px; }
.tree label svg, .tree em { width: 7px; height: 7px; font-style: normal; font-size: 8px; line-height: 7px; flex: none; }
.tree input { appearance: none; width: 6px; height: 6px; flex: none; border: 1px solid #aaa; border-radius: 1px; background: #fff; }
.tree i { width: 3px; height: 8px; margin-left: auto; background: var(--green); flex: none; }
.tree .thin { width: 1px; }

.status { display: flex; align-items: center; gap: 6px; height: 11px; padding: 0 8px 0 2px; color: #555; }
.conn { margin-left: auto; }
.conn a { color: var(--green); }
.zoom { display: flex; align-items: center; gap: 3px; margin: 0 2px; }
.zoom input { appearance: none; width: 49px; height: 7px; background: linear-gradient(#777, #777) center / 100% 1px no-repeat; }
.zoom input::-webkit-slider-thumb { appearance: none; width: 2px; height: 6px; background: #444; }

.taskbar { display: flex; height: 20px; border-top: 1px solid #777; background: linear-gradient(90deg, #cde3bd, #d3e0c8 40%, #d5d6d0 52%, #cfe0c2 62%, #cde5bc 85%, #d8e4d0); color: #222; }
.start { width: 24px; display: flex; justify-content: center; align-items: center; }
.start svg { width: 9px; height: 9px; }
.find { display: flex; align-items: center; gap: 5px; width: 137px; padding: 0 5px; background: #fff; font-size: 7px; }
.find svg { width: 8px; height: 8px; }
.find input { flex: 1; min-width: 0; }
.find .spark { width: 30px; height: 13px; }
.apps { display: grid; grid-auto-flow: column; grid-auto-columns: 1fr; width: 377px; }
.apps button { display: flex; justify-content: center; align-items: center; border-bottom: 2px solid transparent; }
.apps svg { width: 12px; height: 12px; }
.apps .run { border-color: #1d75bd; }
.apps .lit { background: #eef1ec; }
.pr { width: 11px; height: 11px; background: #0b0b40; color: #b9a8ff; font: 700 6px/11px var(--ui); border-radius: 2px; }
.tray { display: flex; align-items: center; gap: 4px; margin-left: auto; padding-right: 11px; }
.cloud { width: 12px; height: 9px; }
.temp { font-size: 7px; padding-right: 6px; }
.clock { padding: 0 6px 0 0; text-align: center; }
```
